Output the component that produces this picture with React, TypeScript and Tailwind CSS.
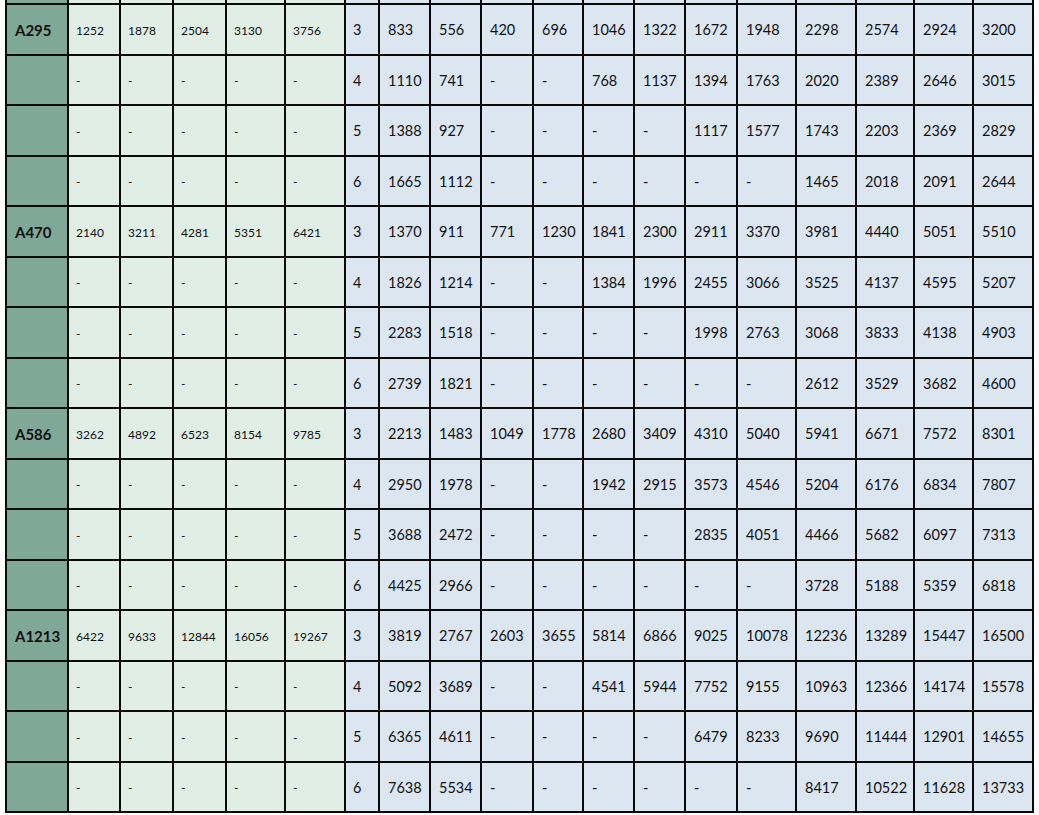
import React from "react";

type Group = { name: string; green: string[]; rows: string[][] };

const groups: Group[] = [
  {
    name: "A295",
    green: ["1252", "1878", "2504", "3130", "3756"],
    rows: [
      "833 556 420 696 1046 1322 1672 1948 2298 2574 2924 3200",
      "1110 741 - - 768 1137 1394 1763 2020 2389 2646 3015",
      "1388 927 - - - - 1117 1577 1743 2203 2369 2829",
      "1665 1112 - - - - - - 1465 2018 2091 2644",
    ].map((r) => r.split(" ")),
  },
  {
    name: "A470",
    green: ["2140", "3211", "4281", "5351", "6421"],
    rows: [
      "1370 911 771 1230 1841 2300 2911 3370 3981 4440 5051 5510",
      "1826 1214 - - 1384 1996 2455 3066 3525 4137 4595 5207",
      "2283 1518 - - - - 1998 2763 3068 3833 4138 4903",
      "2739 1821 - - - - - - 2612 3529 3682 4600",
    ].map((r) => r.split(" ")),
  },
  {
    name: "A586",
    green: ["3262", "4892", "6523", "8154", "9785"],
    rows: [
      "2213 1483 1049 1778 2680 3409 4310 5040 5941 6671 7572 8301",
      "2950 1978 - - 1942 2915 3573 4546 5204 6176 6834 7807",
      "3688 2472 - - - - 2835 4051 4466 5682 6097 7313",
      "4425 2966 - - - - - - 3728 5188 5359 6818",
    ].map((r) => r.split(" ")),
  },
  {
    name: "A1213",
    green: ["6422", "9633", "12844", "16056", "19267"],
    rows: [
      "3819 2767 2603 3655 5814 6866 9025 10078 12236 13289 15447 16500",
      "5092 3689 - - 4541 5944 7752 9155 10963 12366 14174 15578",
      "6365 4611 - - - - 6479 8233 9690 11444 12901 14655",
      "7638 5534 - - - - - - 8417 10522 11628 13733",
    ].map((r) => r.split(" ")),
  },
];

const dark = "bg-[#80a898]";
const green = "bg-[#e1eee6]";
const blue = "bg-[#dce6f1]";

export default function App() {
  const cells: React.ReactNode[] = [];
  // sliver of previous row at top
  cells.push(<div key="s0" className={dark} />);
  for (let i = 0; i < 5; i++) cells.push(<div key={"sg" + i} className={green} />);
  for (let i = 0; i < 13; i++) cells.push(<div key={"sb" + i} className={blue} />);

  groups.forEach((g) => {
    g.rows.forEach((row, ri) => {
      const k = `${g.name}-${ri}`;
      cells.push(
        <div key={k + "n"} className={`${dark} flex items-center pl-[8px] pt-[2px] text-[15px] font-bold text-[#111]`}>
          {ri === 0 ? g.name : ""}
        </div>
      );
      for (let i = 0; i < 5; i++) {
        cells.push(
          <div key={k + "g" + i} className={`${green} flex items-center pl-[7px] pt-[3px] text-[12px] text-[#111]`}>
            {ri === 0 ? g.green[i] : "-"}
          </div>
        );
      }
      cells.push(
        <div key={k + "k"} className={`${blue} flex items-center pl-[7px] pt-[2px] text-[14.5px] text-[#111]`}>
          {String(ri + 3)}
        </div>
      );
      row.forEach((v, i) => {
        cells.push(
          <div key={k + "b" + i} className={`${blue} flex items-center pl-[8px] pt-[2px] text-[14.5px] text-[#111]`}>
            {v}
          </div>
        );
      });
    });
  });

  return (
    <div className="w-[1039px] h-[815px] bg-white overflow-hidden" style={{ fontFamily: "Lato, 'Open Sans', sans-serif" }}>
      <div className="ml-[5px] grid w-max bg-[#0a0a0a] px-[2px] pb-[2px] gap-[2px] grid-cols-[60px_50px_51px_51px_57px_58px_32px_49px_49px_50px_48px_49px_49px_50px_57px_58px_56px_57px_58px] grid-rows-[3px_repeat(16,48.5px)] leading-none">
        {cells}
      </div>
    </div>
  );
}
